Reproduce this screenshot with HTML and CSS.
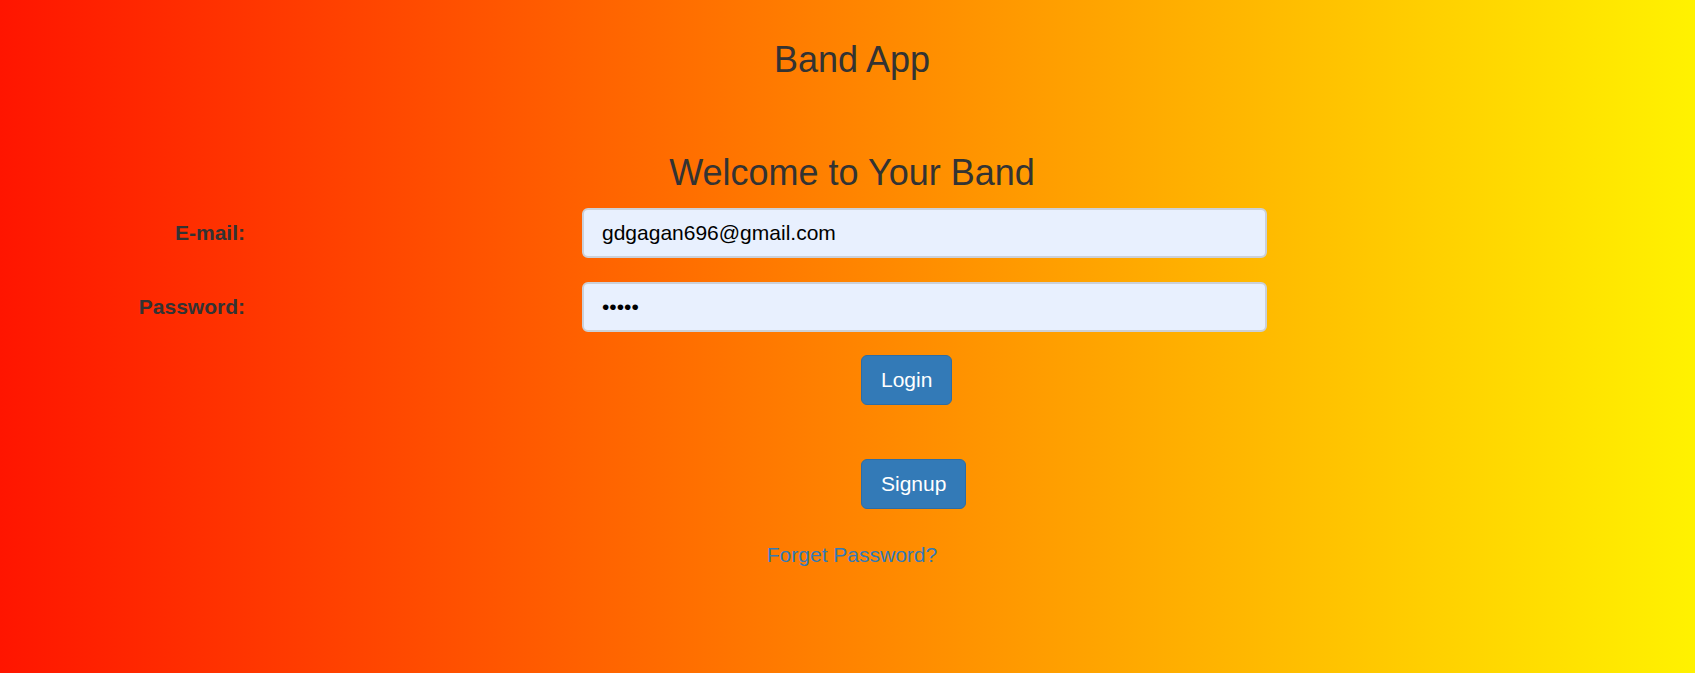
FILE: index.html
```html
<!DOCTYPE html>
<html lang="en">
<head>
<meta charset="utf-8">
<title>Band App</title>
<link rel="stylesheet" href="styles.css">
</head>
<body>
  <div class="page">
    <h1 class="app-title">Band App</h1>
    <h1 class="welcome">Welcome to Your Band</h1>
    <form class="login-form" onsubmit="return false">
      <div class="form-row">
        <label class="form-label" for="email">E-mail:</label>
        <input class="form-input" id="email" type="email" value="gdgagan696@gmail.com">
      </div>
      <div class="form-row">
        <label class="form-label" for="password">Password:</label>
        <input class="form-input" id="password" type="password" value="abcde">
      </div>
      <div class="actions actions-login">
        <button class="btn" type="submit">Login</button>
      </div>
      <div class="actions actions-signup">
        <button class="btn" type="button">Signup</button>
      </div>
      <div class="forgot">
        <a class="forgot-link" href="#">Forget Password?</a>
      </div>
    </form>
  </div>
</body>
</html>
```

FILE: styles.css
```css
* {
  box-sizing: border-box;
}

html, body {
  margin: 0;
  padding: 0;
  height: 100%;
}

body {
  font-family: "Liberation Sans", Arial, Helvetica, sans-serif;
  color: #333;
  background: linear-gradient(to right, #ff1500 0%, #fff200 100%);
  overflow: hidden;
}

.page {
  min-height: 100%;
}

.app-title,
.welcome {
  font-size: 36px;
  font-weight: 400;
  line-height: 40px;
  text-align: center;
  padding-left: 9px;
  margin: 0;
  color: #333;
}

.app-title {
  padding-top: 40px;
}

.welcome {
  margin-top: 73px;
}

.login-form {
  margin-top: 15px;
  display: flex;
  flex-direction: column;
}

.form-row {
  display: grid;
  grid-template-columns: 245px 685px;
  column-gap: 337px;
  align-items: center;
  margin-bottom: 24px;
}

.form-label {
  text-align: right;
  font-size: 21px;
  font-weight: 700;
  color: #333;
}

.form-input {
  height: 50px;
  width: 100%;
  padding: 0 18px;
  font-family: "Liberation Sans", Arial, sans-serif;
  font-size: 21px;
  color: #000;
  background: #e8f0fe;
  border: 2px solid #cbd0d8;
  border-radius: 6px;
  outline: none;
}

.actions {
  padding-left: 861px;
  display: flex;
}

.actions-login {
  margin-top: -1px;
}

.actions-signup {
  margin-top: 54px;
}

.btn {
  height: 50px;
  padding: 0 19px;
  font-family: "Liberation Sans", Arial, sans-serif;
  font-size: 21px;
  color: #fff;
  background: #337ab7;
  border: 1px solid #2e6da4;
  border-radius: 6px;
  cursor: pointer;
}

.forgot {
  margin-top: 31px;
  text-align: center;
  padding-left: 9px;
  line-height: 30px;
}

.forgot-link {
  font-size: 21px;
  color: #337ab7;
  text-decoration: none;
}
```
